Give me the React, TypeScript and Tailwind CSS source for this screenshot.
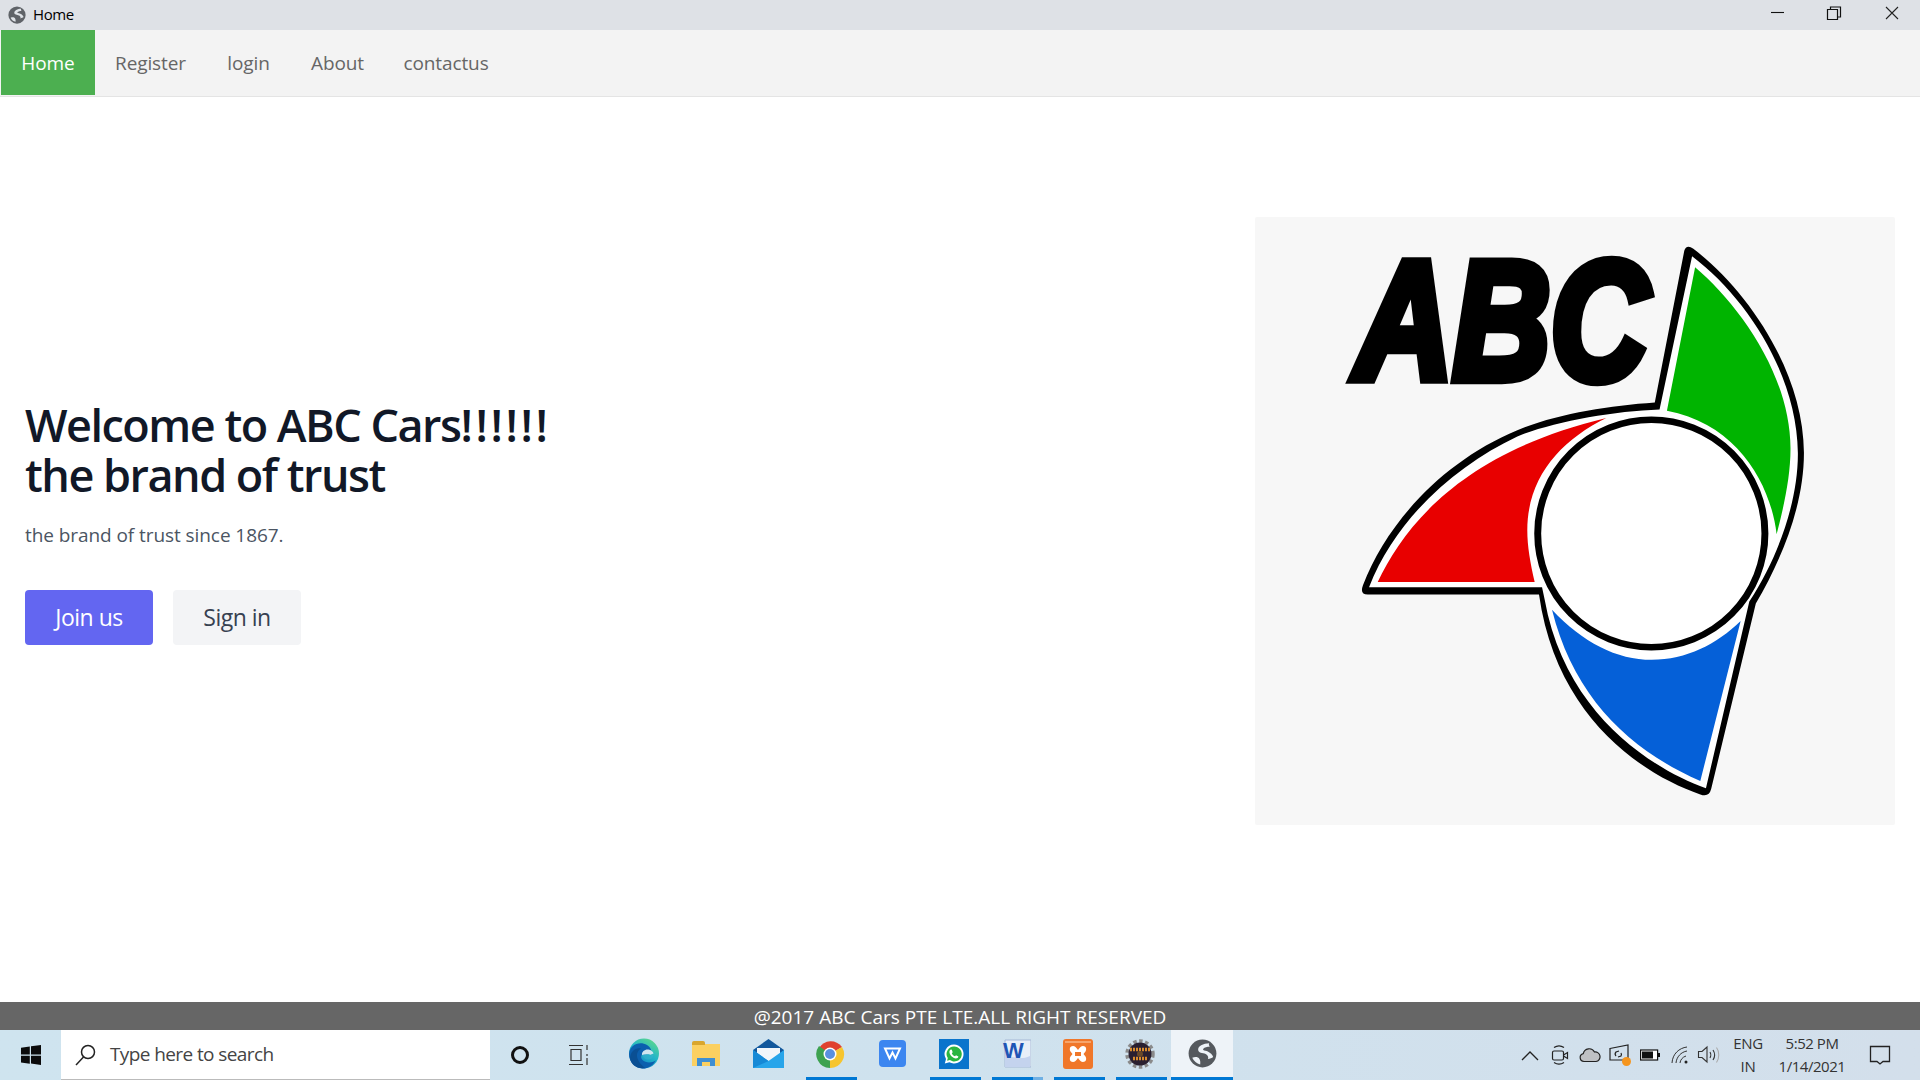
import React from "react";

const seg = { fontFamily: '"Open Sans","Noto Sans",sans-serif' };

function Globe({ size = 18, dark = "#5f6368", light = "#dfe3e8" }: { size?: number; dark?: string; light?: string }) {
  return (
    <svg width={size} height={size} viewBox="0 0 24 24">
      <circle cx="12" cy="12" r="11.500" fill={dark} />
      <path d="M17.500 3.500C13 3.500 7.500 6 8.500 9.500c.8 2.700 5 1.700 7 3.500 1.200 1.100 1.500 2.300 1 3.500 1.700-.2 3.400-.8 4.300-1.700-.7-2.600-3.800-4.300-6.300-5-1.700-.5-2.500-1-1.800-1.800.9-1 3.300-1.500 5.300-1.500-.4-1-1.100-2-.5-3z" fill={light} />
      <path d="M3.500 15.500c2.500-1 5-.7 6 1 .7 1.300.8 2.800.6 4.500-2.800-.6-5.400-2.700-6.600-5.500z" fill={light} />
    </svg>
  );
}

function Logo() {
  return (
    <svg width="640" height="608" viewBox="35 42 1476 1491" preserveAspectRatio="none" className="block">
      <path
        d="M1025 125Q1030 108 1046 120C1170 220 1300 420 1301 620C1301 750 1250 880 1190 990L1087 1445Q1082 1466 1062 1458C930 1410 730 1270 690 968L295 968Q276 968 284 945C340 790 470 640 640 565C730 525 850 505 957 497Z"
        fill="#000"
      />
      <path
        d="M1043 138C1170 240 1285 430 1287 620C1288 740 1240 880 1175 985L1075 1443C950 1395 750 1260 703 980L697 950L298 950C360 780 500 650 640 580C720 545 860 518 968 514Z"
        fill="#fff"
      />
      <path
        d="M1050 165C1150 255 1270 430 1270 610C1270 680 1255 750 1238 820C1225 700 1150 550 985 517Z"
        fill="#00b400"
      />
      <path
        d="M318 937C380 800 510 620 845 535C740 590 663 680 663 810C663 850 670 890 680 937Z"
        fill="#e80000"
      />
      <path
        d="M720 1005C790 1085 870 1128 950 1128C1030 1128 1100 1090 1155 1033L1062 1425C900 1350 770 1220 720 1005Z"
        fill="#0560d8"
      />
      <ellipse cx="949" cy="818" rx="262" ry="279" fill="#fff" stroke="#000" strokeWidth="16" />
      <text
        x="266"
        y="439"
        fill="#000"
        stroke="#000"
        strokeWidth="26"
        fontFamily="Liberation Sans, sans-serif"
        fontWeight="700"
        fontStyle="italic"
        fontSize="412"
        textLength="676"
        lengthAdjust="spacingAndGlyphs"
      >
        ABC
      </text>
    </svg>
  );
}

function Edge() {
  return (
    <svg width="30" height="31" viewBox="0 0 30 31">
      <defs>
        <linearGradient id="edgeA" x1="0.800" y1="0" x2="0.200" y2="1">
          <stop offset="0" stopColor="#5fd98a" />
          <stop offset="0.450" stopColor="#22b6c8" />
          <stop offset="1" stopColor="#0e74c4" />
        </linearGradient>
      </defs>
      <circle cx="15" cy="15.500" r="15" fill="url(#edgeA)" />
      <path d="M0 16C1 6 11 3 18 7c4 2.500 5 6 4 9l-9 .5c-3 4 2 8 7 8 3 0 6-1 7-2.500-3 6-9 9-14 8.500C6 30 0 24 0 16z" fill="#0c5fae" />
      <path d="M1 20c.5-7 6-11 11-9.500-3 2-5 5-3.500 10 1 3.500 4 6.500 7.500 9.500C8 31 2 27 1 20z" fill="#0a4f93" />
      <path d="M13 17c-.5-3.500 3-6 6.500-5.500 2.500.5 4.500 2 5 4l-3 1.200c-2.500-.5-6-.5-8.500.3z" fill="#cfe5f0" />
      <path d="M13 17c2.500 0 6 0 8.500.5l3-1.500c.5 4-3 5.500-6 5.500-2.500 0-4.500-2-5.500-4.500z" fill="#3ab0ce" opacity=".55" />
    </svg>
  );
}

function Slot({ children, line, active, split }: { children: React.ReactNode; line?: boolean; active?: boolean; split?: boolean }) {
  return (
    <div className={`relative flex h-[50px] w-[62px] items-center justify-center ${active ? "bg-[#eef3f8]" : ""}`}>
      <div className="mb-[3px] flex items-center justify-center">{children}</div>
      {line && <div className="absolute bottom-0 left-[7px] right-[4px] h-[3px] bg-[#0078d4]" />}
      {split && (
        <div className="absolute bottom-0 left-[7px] right-[4px] flex h-[3px] bg-[#0078d4]">
          <div className="ml-auto h-[3px] w-[10px] bg-[#6fb0e4]" />
        </div>
      )}
      {active && <div className="absolute bottom-0 left-0 right-0 h-[3px] bg-[#0078d4]" />}
    </div>
  );
}

function Tray({ w, children }: { w: number; children: React.ReactNode }) {
  return (
    <div className={`flex h-[50px] items-center justify-center ${w === 28 ? "w-[28px]" : "w-[30px]"}`}>{children}</div>
  );
}

export default function App() {
  return (
    <div className="flex h-[1080px] w-[1920px] flex-col overflow-hidden bg-white" style={seg}>
      {/* title bar */}
      <div className="flex h-[30px] shrink-0 items-center bg-[#dee1e6]">
        <div className="ml-[8px]">
          <Globe />
        </div>
        <span className="ml-[7px] mb-[2px] text-[15px] tracking-[-0.4px] text-black">Home</span>
        <div className="ml-auto flex items-center">
          <svg width="180" height="30" viewBox="0 0 180 30" className="block">
            <path d="M31 12.500h13" stroke="#111" strokeWidth="1.100" />
            <path d="M87.500 9.500h10v10h-10zM90.500 9.500v-2.500h10v10h-3" fill="none" stroke="#111" strokeWidth="1.200" />
            <path d="M146 7l12 12M158 7l-12 12" stroke="#222" strokeWidth="1.100" />
          </svg>
        </div>
      </div>

      {/* nav */}
      <nav className="flex h-[67px] shrink-0 border-b border-[#e4e4e4] bg-[#f3f3f3] pl-px text-[19px] tracking-[-0.1px]">
        <a className="flex h-[65px] w-[94px] items-center justify-center bg-[#4caf50] pt-[2px] font-medium text-white">Home</a>
        <a className="flex h-[65px] w-[111px] items-center justify-center pt-[2px] text-[#666]">Register</a>
        <a className="flex h-[65px] w-[85px] items-center justify-center pt-[2px] text-[#666]">login</a>
        <a className="flex h-[65px] w-[93px] items-center justify-center pt-[2px] text-[#666]">About</a>
        <a className="flex h-[65px] w-[124px] items-center justify-center pt-[2px] text-[#666]">contactus</a>
      </nav>

      {/* hero */}
      <main className="flex min-h-0 flex-1 items-start justify-between pl-[25px] pr-[25px]">
        <div className="mt-[303px] flex flex-col">
          <h1 className="text-[45px] leading-[50px] font-semibold tracking-[-1.5px] text-[#111827]">
            Welcome to ABC Cars<span className="tracking-[2.6px]">!!!!!!</span>
            <br />
            the brand of trust
          </h1>
          <p className="mt-[21px] text-[19px] leading-[28px] tracking-[-0.07px] text-[#4b5563]">
            the brand of trust since 1867.
          </p>
          <div className="mt-[41px] flex gap-[20px]">
            <button className="h-[55px] w-[128px] rounded-[4px] bg-[#6366f1] text-[23px] tracking-[-0.5px] text-white">
              Join us
            </button>
            <button className="h-[55px] w-[128px] rounded-[4px] bg-[#f3f4f6] text-[23px] tracking-[-0.5px] text-[#374151]">
              Sign in
            </button>
          </div>
        </div>
        <div className="mt-[120px] h-[608px] w-[640px] shrink-0 rounded-[2px] bg-[#f7f7f7]">
          <Logo />
        </div>
      </main>

      {/* footer */}
      <footer className="flex h-[28px] shrink-0 items-center justify-center bg-[#666666] pt-[2px] text-[19px] tracking-[0.02px] text-white">
        @2017 ABC Cars PTE LTE.ALL RIGHT RESERVED
      </footer>

      {/* taskbar */}
      <div className="flex h-[50px] shrink-0 items-center bg-gradient-to-r from-[#cfe4ef] via-[#cfe2ee] to-[#d3dfeb]">
        <div className="flex h-[50px] w-[61px] items-center justify-center">
          <svg width="20" height="20" viewBox="0 0 20 20">
            <path d="M0 2.800l8.800-1.300v8H0zM10 1.300L20 0v9.500H10zM0 10.700h8.800v8L0 17.400zM10 10.700h10V20l-10-1.400z" fill="#0b0b0b" />
          </svg>
        </div>
        <div className="flex h-[50px] w-[429px] items-center border-b border-[#bbb] bg-white pl-[12px] text-[19px] tracking-[-0.6px] text-[#444]">
          <svg width="24" height="24" viewBox="0 0 24 24" fill="none" stroke="#222" strokeWidth="1.500">
            <circle cx="15" cy="9" r="6.500" />
            <path d="M10.500 14L3 22" />
          </svg>
          <span className="ml-[13px]">Type here to search</span>
        </div>
        <div className="flex h-[50px] w-[60px] items-center justify-center">
          <div className="h-[18px] w-[18px] rounded-full border-[3px] border-[#111]" />
        </div>
        <div className="flex h-[50px] w-[58px] items-center justify-center">
          <svg width="22" height="22" viewBox="0 0 22 22" fill="none" stroke="#333" strokeWidth="1.200">
            <path d="M1 1.500h14M3 5.500h10v11H3zM1 20.500h14M19 1v5M19 10v2M19 14v7" />
          </svg>
        </div>
        <div className="ml-[5px] flex items-center">
          <Slot>
            <Edge />
          </Slot>
          <Slot>
            <svg width="28" height="25" viewBox="0 0 28 25">
              <path d="M0 3h28v22H0z" fill="#fbd061" />
              <path d="M0 2q0-2 2-2h9q2 0 2 2v2H0z" fill="#d9a62e" />
              <path d="M5 17h18v8h-5v-4h-8v4H5z" fill="#3f8fd2" />
            </svg>
          </Slot>
          <Slot>
            <svg width="31" height="29" viewBox="0 0 31 29">
              <path d="M15.500 0L31 11v18H0V11z" fill="#12589c" />
              <path d="M4 9h23v10l-11.500 6L4 19z" fill="#f2f6fa" />
              <path d="M0 11l15.500 11L31 11v18H0z" fill="#28a5ea" />
              <path d="M0 11l15.500 11L0 29z" fill="#1689d6" />
            </svg>
          </Slot>
          <Slot line>
            <svg width="30" height="30" viewBox="0 0 30 30">
              <path d="M15 15 4 9A13.800 13.800 0 0 1 27 8z" fill="#e0402f" />
              <path d="M15 15 27 8A13.800 13.800 0 0 1 15 29z" fill="#f6c52f" />
              <path d="M15 15 15 29A13.800 13.800 0 0 1 4 7z" fill="#3da250" />
              <circle cx="15" cy="15" r="6.500" fill="#fff" />
              <circle cx="15" cy="15" r="5" fill="#5a90e0" />
            </svg>
          </Slot>
          <Slot>
            <svg width="27" height="27" viewBox="0 0 27 27">
              <rect width="27" height="27" rx="4" fill="#3c86f0" />
              <path d="M6 8.500h15l-4.500 10-3-6-3 6z" fill="none" stroke="#fff" strokeWidth="2" />
            </svg>
          </Slot>
          <Slot line>
            <div className="flex h-[30px] w-[30px] items-center justify-center bg-[#0a74cc]">
              <svg width="22" height="22" viewBox="0 0 22 22">
                <path d="M11 1.500a9.500 9.500 0 0 0-8 14.500L1.800 20.500l4.600-1.200A9.500 9.500 0 1 0 11 1.500z" fill="#fff" />
                <path d="M11 3.500a7.500 7.500 0 0 0-6.200 11.600l-.7 2.700 2.800-.7A7.500 7.500 0 1 0 11 3.500z" fill="#2ab540" />
                <path d="M8 6.500c-.8 0-1.600 1-1.600 2.300 0 3 3.300 6.500 6.500 6.700 1.300 0 2.500-1 2.500-2l-2.400-1.200-1 1c-1.500-.5-2.600-1.700-3.200-3.100l.9-1L8.800 6.700z" fill="#fff" />
              </svg>
            </div>
          </Slot>
          <Slot split>
            <svg width="29" height="29" viewBox="0 0 29 29">
              <path d="M3 1h26v27H3z" fill="#e9eff8" stroke="#a5b8d6" />
              <path d="M3 19c8-3 14 3 25-2v11H3z" fill="#c4d3ee" />
              <text x="1" y="19" fontFamily="Liberation Sans" fontWeight="700" fontSize="22" fill="#1f55b5">
                W
              </text>
            </svg>
          </Slot>
          <Slot line>
            <svg width="30" height="30" viewBox="0 0 30 30">
              <rect width="30" height="30" rx="3" fill="#f0772a" />
              <path d="M2 3h26" stroke="#f9b483" strokeWidth="1.500" />
              <path d="M10 7c-3 0-4 3-2.500 5.500L9.500 15l-2 2.500C6 20 7 23 10 23c2 0 3-1.500 5-4 2 2.500 3 4 5 4 3 0 4-3 2.500-5.500l-2-2.500 2-2.500C24 10 23 7 20 7c-2 0-3 1.500-5 4-2-2.500-3-4-5-4z" fill="#fff" />
              <path d="M12 13h6v4h-6z" fill="#f0772a" />
            </svg>
          </Slot>
          <Slot line>
            <svg width="30" height="30" viewBox="0 0 30 30">
              <circle cx="15" cy="15" r="13" fill="none" stroke="#8a8a8a" strokeWidth="3.500" strokeDasharray="3.500 2.500" />
              <circle cx="15" cy="15" r="11.500" fill="#2a2030" />
              <path d="M5 10.500h20M8 19.500h14" stroke="#d98c2e" strokeWidth="3.500" strokeDasharray="2 1" />
              <circle cx="15" cy="15" r="3" fill="#6a4a2a" />
            </svg>
          </Slot>
          <Slot active>
            <Globe size={29} dark="#55595e" light="#eef3f8" />
          </Slot>
        </div>

        {/* tray */}
        <div className="ml-auto flex h-[50px] items-center text-[#222]">
          <Tray w={30}>
            <svg width="20" height="12" viewBox="0 0 20 12" fill="none" stroke="#222" strokeWidth="1.300">
              <path d="M2 11l8-8 8 8" />
            </svg>
          </Tray>
          <Tray w={30}>
            <svg width="20" height="22" viewBox="0 0 20 22" fill="none" stroke="#222" strokeWidth="1.200">
              <path d="M4 3.500c3-2 7-2 10 0M4 18.500c3 2 7 2 10 0" />
              <rect x="2.500" y="7" width="11" height="9" rx="1.500" />
              <path d="M13.500 11l4-2.500v6l-4-2.500" />
            </svg>
          </Tray>
          <Tray w={30}>
            <svg width="22" height="16" viewBox="0 0 22 16">
              <path d="M5 14.500a4 4 0 0 1-.7-7.900A6 6 0 0 1 15.500 5a4.800 4.800 0 0 1 1.500 9.500z" fill="#bfc1c4" stroke="#222" strokeWidth="1.200" />
            </svg>
          </Tray>
          <Tray w={30}>
            <div className="relative h-[22px] w-[22px]">
              <svg width="20" height="19" viewBox="0 0 20 19" fill="none" stroke="#222" strokeWidth="1.200">
                <path d="M1 4.500l18-3.500v15H1z" />
                <path d="M7 12a3 3 0 0 1 0-4l3-1M12 9a3 3 0 0 1 0 3l-3 1" />
              </svg>
              <div className="absolute bottom-0 right-0 h-[9px] w-[9px] rounded-full bg-[#f5951e]" />
            </div>
          </Tray>
          <Tray w={30}>
            <svg width="20" height="12" viewBox="0 0 20 12">
              <rect x=".6" y="1" width="17" height="10" fill="#fff" stroke="#111" strokeWidth="1.200" />
              <rect x="2" y="2.500" width="11" height="7" fill="#111" />
              <rect x="18" y="4" width="2" height="4" fill="#111" />
            </svg>
          </Tray>
          <Tray w={30}>
            <svg width="18" height="18" viewBox="0 0 18 18" fill="none" stroke="#333" strokeWidth="1">
              <path d="M1 17C1.500 8 8 2 16 1M5 17c.5-6 5-11 11-12M9 17c.3-3 2.500-6 6-7" />
              <circle cx="15" cy="16" r="1.500" fill="#222" stroke="none" />
            </svg>
          </Tray>
          <Tray w={28}>
            <svg width="24" height="20" viewBox="0 0 24 20" fill="none" stroke="#333" strokeWidth="1.100">
              <path d="M1.500 6.500h3.500l5-4.500v15l-5-4.500H1.500z" />
              <path d="M13 7c1 1.500 1 4.500 0 6M16 5c2 3 2 7 0 10" />
              <path d="M19.500 2.500c3 4 3 11 0 15" stroke="#aaa" />
            </svg>
          </Tray>
          <div className="ml-[3px] w-[44px] text-center text-[15px] leading-[23px] tracking-[-0.3px] text-[#333]">
            <div>ENG</div>
            <div>IN</div>
          </div>
          <div className="ml-[5px] w-[74px] text-center text-[15px] leading-[23px] tracking-[-0.45px] text-[#333]">
            <div>5:52 PM</div>
            <div>1/14/2021</div>
          </div>
          <svg width="22" height="22" viewBox="0 0 22 22" fill="none" stroke="#222" strokeWidth="1.300" className="ml-[20px] mr-[29px]">
            <path d="M1.500 2.500h19v15h-6.500l-3 2.500-3-2.500h-6.500z" />
          </svg>
        </div>
      </div>
    </div>
  );
}
